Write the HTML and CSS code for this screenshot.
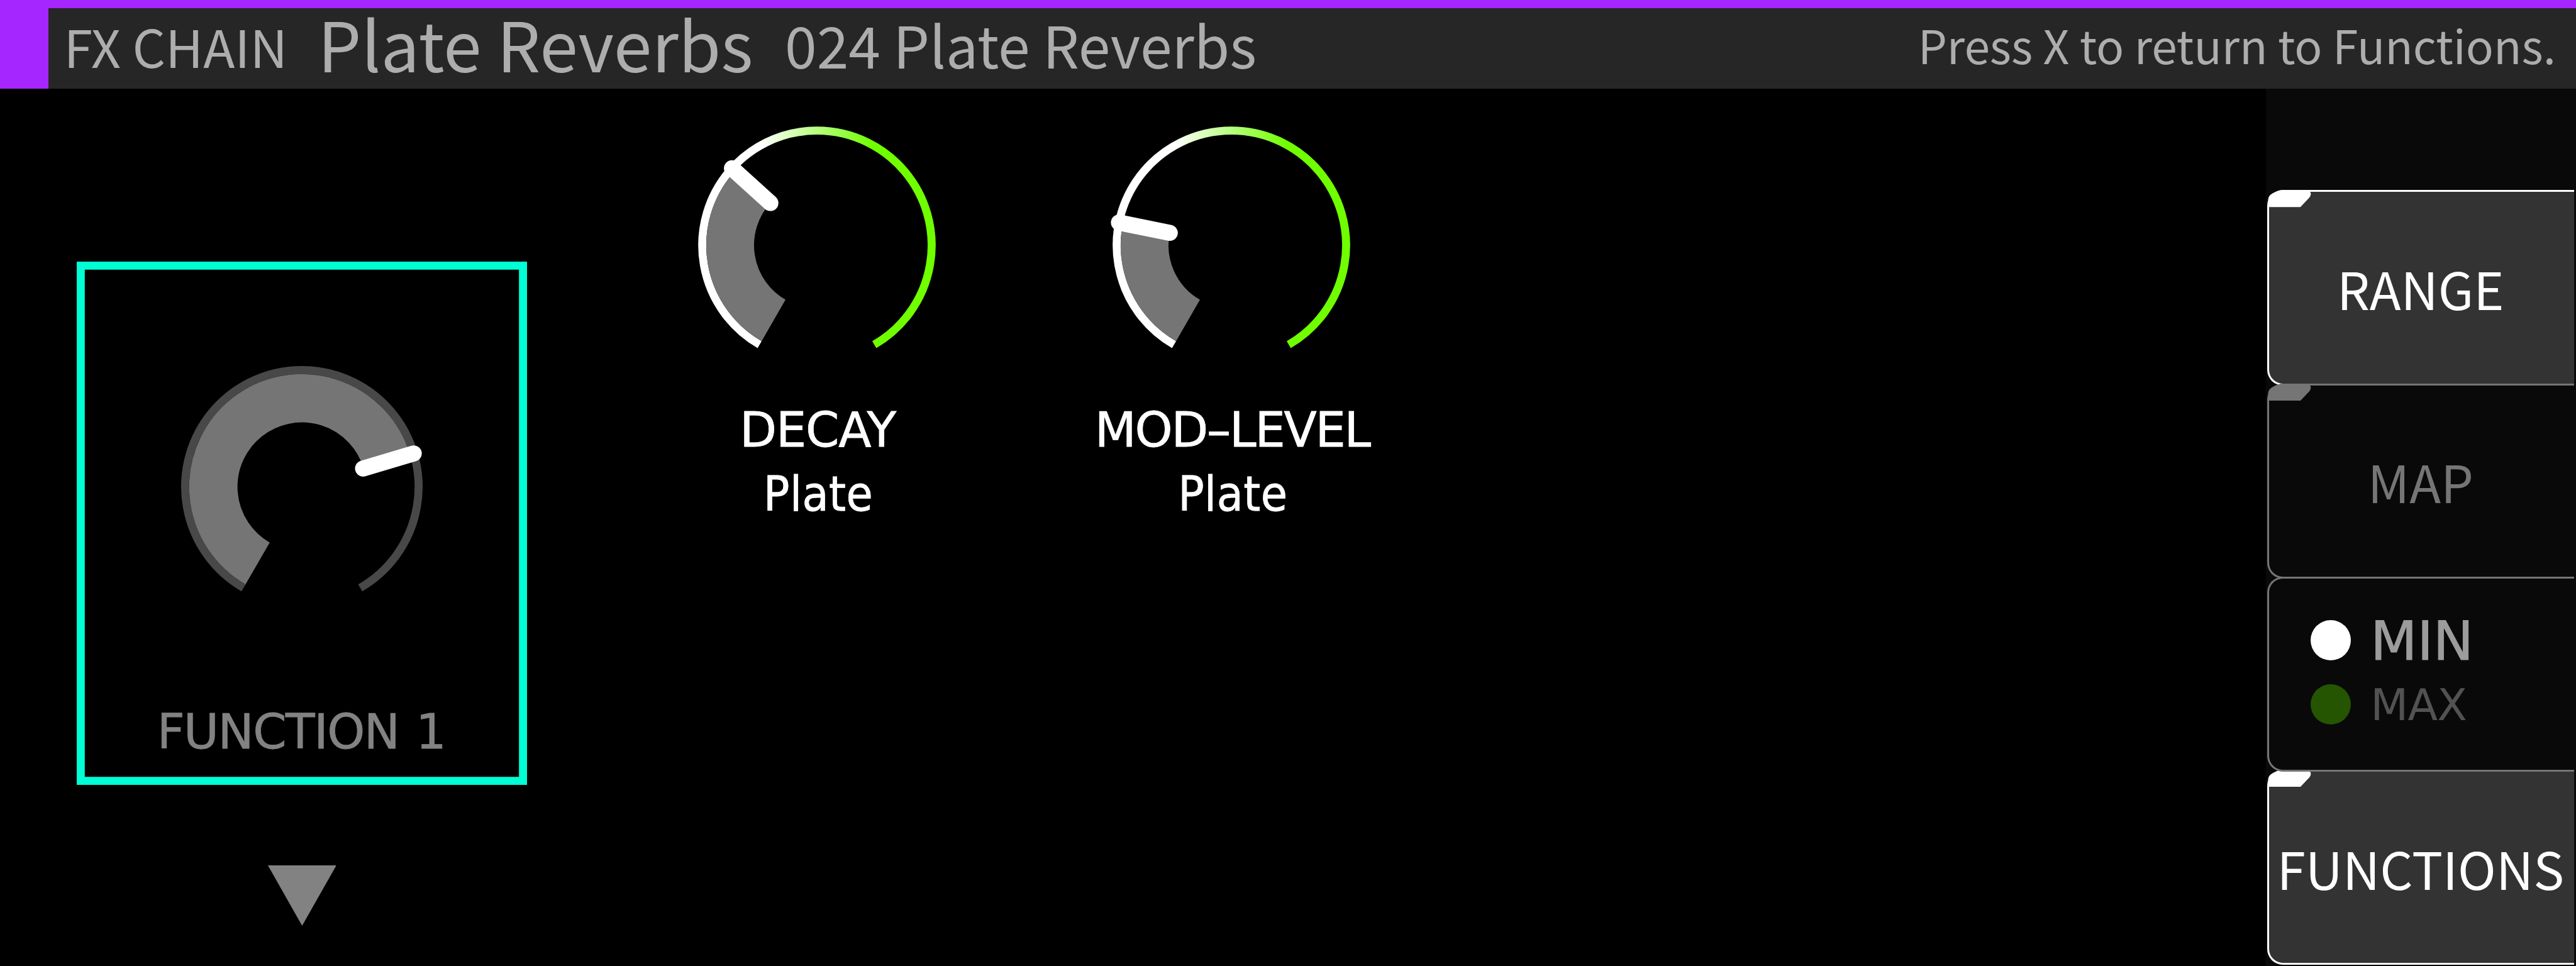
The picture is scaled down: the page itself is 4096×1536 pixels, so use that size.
FILE: index.html
```html
<!DOCTYPE html>
<html lang="en">
<head>
    <meta charset="UTF-8">
    <title>FX Chain</title>
    <link rel="stylesheet" href="styles.css">
</head>
<body>
    <header>
        <div class="title-bar">
            <span class="section">FX CHAIN</span>
            <h1>Plate Reverbs</h1>
            <span class="preset">024 Plate Reverbs</span>
            <span class="hint">Press X to return to Functions.</span>
        </div>
    </header>

    <main>
        <div class="function">
            <div class="function-card">
                <svg class="knob" viewBox="-240 -240 480 480">
                    <path class="track" d="M-116 200.9A232 232 0 1 1 116 200.9"/>
                    <path class="fill" stroke-width="96" d="M-88 152.4A176 176 0 1 1 168.7 -50.3"/>
                    <path class="pointer" d="M121.7 -36.3L222.3 -66.3"/>
                </svg>
                <p class="label">FUNCTION 1</p>
            </div>
            <svg class="arrow" viewBox="0 0 136 120">
                <path d="M0 0H136L68 120Z"/>
            </svg>
        </div>

        <div class="encoders">
            <div class="encoder">
                <svg class="knob" viewBox="-240 -240 480 480">
                    <defs>
                        <linearGradient id="range" gradientUnits="userSpaceOnUse" x1="-113" y1="0" x2="111" y2="0">
                            <stop offset="0" stop-color="#fff"/>
                            <stop offset="1" stop-color="#70ff00"/>
                        </linearGradient>
                    </defs>
                    <path class="track range" d="M-114 197.5A228 228 0 1 1 114 197.5"/>
                    <path class="fill" stroke-width="95" d="M-86.25 149.4A172.5 172.5 0 0 1 -127.8 -115.9"/>
                    <path class="pointer" d="M-92.6 -84L-168.9 -153.1"/>
                </svg>
                <p class="label">DECAY</p>
                <p class="label sub">Plate</p>
            </div>
            <div class="encoder">
                <svg class="knob" viewBox="-240 -240 480 480">
                    <path class="track range" d="M-114 197.5A228 228 0 1 1 114 197.5"/>
                    <path class="fill" stroke-width="95" d="M-86.25 149.4A172.5 172.5 0 0 1 -169.1 -34.1"/>
                    <path class="pointer" d="M-122.5 -24.7L-223.5 -45.1"/>
                </svg>
                <p class="label wide">MOD–LEVEL</p>
                <p class="label sub">Plate</p>
            </div>
        </div>

        <nav class="softkeys">
            <div class="key active">
                <svg class="tab" viewBox="0 0 90 34"><path d="M2 34V18Q3 6 30 0H80Q91 5 84 15L66 34Z"/></svg>
                RANGE
            </div>
            <div class="key">
                <svg class="tab" viewBox="0 0 90 34"><path d="M2 34V18Q3 6 30 0H80Q91 5 84 15L66 34Z"/></svg>
                MAP
            </div>
            <div class="key options">
                <div class="option min"><i class="dot"></i><span>MIN</span></div>
                <div class="option max"><i class="dot"></i><span>MAX</span></div>
            </div>
            <div class="key active last">
                <svg class="tab" viewBox="0 0 90 34"><path d="M2 34V18Q3 6 30 0H80Q91 5 84 15L66 34Z"/></svg>
                FUNCTIONS
            </div>
        </nav>
    </main>
</body>
</html>
```
FILE: styles.css
```css
* { margin: 0; padding: 0; box-sizing: border-box; }
body {
    width: 4096px; height: 1536px; overflow: hidden;
    display: flex; flex-direction: column;
    background: #000; color: #fff;
    font-family: "Noto Sans CJK JP", "Noto Sans", sans-serif;
    white-space: nowrap;
}
svg { display: block; }

header { background: #a626ff; height: 140.8px; padding: 12.8px 0 0 76.8px; }
.title-bar {
    display: flex; align-items: flex-start; height: 128px;
    padding: 0 32px 0 24.6px; background: #262626; color: #adadad;
}
.title-bar h1 { margin: 0 50.6px 0 48.2px; font-size: 109.3px; font-weight: 400; line-height: 109.4px; }
.section { font-size: 82.5px; line-height: 119px; }
.preset { font-size: 91.2px; line-height: 112.4px; }
.hint { margin-left: auto; font-size: 73px; line-height: 115.4px; }

main { display: flex; height: 1395.2px; padding-left: 121.6px; }

/* selected function */
.function { width: 716.8px; padding-top: 275.2px; }
.function-card {
    height: 832px; padding-top: 166.4px;
    box-shadow: inset 0 0 0 12.8px #00ffd5;
}
.arrow { width: 108.8px; height: 96px; margin: 128px auto 0; fill: #828282; }

/* knobs */
.knob { width: 384px; height: 384px; margin: 0 auto; fill: none; overflow: visible; }
.track { stroke: #484848; stroke-width: 16; }
.track.range { stroke: url(#range); }
.fill { stroke: #757575; }
.pointer { stroke: #fff; stroke-width: 32; stroke-linecap: round; }

.encoders { display: flex; flex: 1; padding: 57.6px 0 0 131.2px; }
.encoder { width: 659.2px; }
.knob + .label { margin-top: 50.4px; }
.label {
    font-family: "DejaVu Sans", sans-serif; font-size: 76.4px;
    line-height: 102.4px; letter-spacing: -1.1px; text-align: center;
    padding-left: 2px; -webkit-text-stroke: 0.8px;
}
.label.wide { letter-spacing: -2.2px; }
.label.sub { padding-left: 4px; font-family: "DejaVu Sans Condensed", "DejaVu Sans", sans-serif; letter-spacing: 0.5px; }
.function-card .knob + .label {
    margin-top: 147.6px; padding: 0 2px 0 0; line-height: 100px;
    letter-spacing: -1.5px; word-spacing: 4px; color: #828282;
}

/* soft keys on the right edge */
.softkeys { width: 492.8px; padding: 161.6px 3.2px 0 1.6px; background: #090909; }
.key {
    position: relative; z-index: 1;
    display: flex; align-items: center; justify-content: center;
    height: 310.2px; margin-bottom: -3px; padding-right: 3px;
    border: 3px solid #757575; border-right: none;
    border-radius: 25px 0 0 25px;
    color: #757575; font-size: 82px;
}
.key.active { z-index: 0; background: #333; border-color: #fff; color: #fff; }
.tab { position: absolute; left: -3px; top: -3px; width: 72px; height: 27.2px; fill: #757575; }
.active .tab { fill: #fff; }

.key.options { flex-direction: column; align-items: flex-start; padding: 0 0 6px 65.8px; }
.option { display: flex; align-items: center; gap: 31.6px; height: 102.4px; font-family: "DejaVu Sans", sans-serif; }
.dot { width: 64px; height: 64px; border-radius: 50%; background: #fff; }
.min { font-size: 86px; color: #9c9c9c; -webkit-text-stroke: 1px; }
.min span { padding-top: 2px; }
.max { font-size: 69.6px; letter-spacing: -0.8px; color: #525252; }
.max span { padding-top: 1px; }
.max .dot { background: #255500; }
```
